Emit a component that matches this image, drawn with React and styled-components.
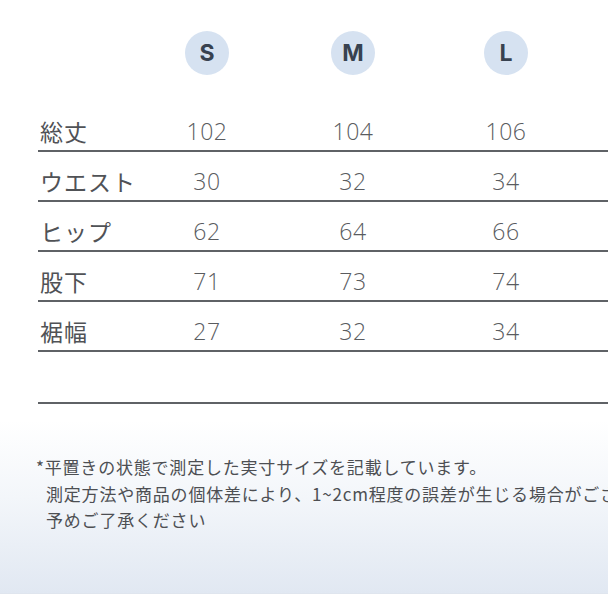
import styled, { createGlobalStyle } from "styled-components";

const GlobalStyle = createGlobalStyle`
    html, body {
        margin: 0;
        padding: 0;
        background: #ffffff;
    }
    body {
        width: 608px;
        height: 608px;
        overflow: hidden;
        font-family: "Noto Sans CJK JP", "Noto Sans", sans-serif;
    }
`

const Page = styled.div`
    width: 608px;
    height: 608px;
    display: flex;
    flex-direction: column;
    background: #ffffff;
    overflow: hidden;
`

const Table = styled.div`
    padding: 31px 0 0 38px;
    display: flex;
    flex-direction: column;
`

const Grid = styled.div`
    display: grid;
    grid-template-columns: 96px 146px 146px 160px 1fr;
    align-items: center;
`

const HeaderRow = styled(Grid)`
    height: 44px;
    margin-bottom: 27px;
`

const SizeBadge = styled.div`
    justify-self: center;
    width: 44px;
    height: 44px;
    border-radius: 50%;
    background: #d6e2f1;
    color: #384250;
    font-family: "Inter", "Open Sans", sans-serif;
    font-weight: 700;
    font-size: 23px;
    display: flex;
    align-items: center;
    justify-content: center;
`

const Row = styled(Grid)`
    height: ${p => p.$h || 50}px;
    box-sizing: border-box;
    border-bottom: 2px solid #5f6266;
    align-items: end;
    padding-bottom: 6px;
`

const Label = styled.div`
    padding-left: 2px;
    font-size: 23px;
    line-height: 26px;
    letter-spacing: 1px;
    color: #505256;
    white-space: nowrap;
`

const Value = styled.div`
    justify-self: center;
    font-family: "Open Sans", "Liberation Sans", sans-serif;
    font-weight: 300;
    font-size: 23px;
    line-height: 26px;
    letter-spacing: 0.5px;
    color: #5a5c5f;
`

const Footer = styled.div`
    margin-top: 16px;
    flex: 1;
    display: flex;
    flex-direction: column;
`

const NoteArea = styled.div`
    flex: 1;
    padding: 34px 0 0 36px;
    background: linear-gradient(to bottom, #ffffff 0%, #f3f6fa 45%, #e1e8f2 100%);
    border-bottom: 1px solid #dfe5ee;
    overflow: hidden;
`

const NoteLine = styled.div`
    font-size: 17px;
    line-height: 26.5px;
    color: #4d4f53;
    white-space: nowrap;
    padding-left: ${p => (p.$indent ? 10 : 0)}px;
    letter-spacing: 0.8px;
`

const BottomStrip = styled.div`
    height: 14px;
    background: #ffffff;
`

const sizes = ["S", "M", "L"];
const rows = [
    { label: "総丈", values: [102, 104, 106] },
    { label: "ウエスト", values: [30, 32, 34] },
    { label: "ヒップ", values: [62, 64, 66] },
    { label: "股下", values: [71, 73, 74] },
    { label: "裾幅", values: [27, 32, 34] },
];

export default function App() {
    return <>
        <GlobalStyle />
        <Page>
            <Table>
                <HeaderRow>
                    <div />
                    {sizes.map(s => <SizeBadge key={s}>{s}</SizeBadge>)}
                </HeaderRow>
                {rows.map(r => (
                    <Row key={r.label}>
                        <Label>{r.label}</Label>
                        {r.values.map((v, i) => <Value key={i}>{v}</Value>)}
                    </Row>
                ))}
                <Row $h={52} />
            </Table>
            <Footer>
                <NoteArea>
                    <NoteLine>*平置きの状態で測定した実寸サイズを記載しています。</NoteLine>
                    <NoteLine $indent>測定方法や商品の個体差により、1~2cm程度の誤差が生じる場合がございます。</NoteLine>
                    <NoteLine $indent>予めご了承ください</NoteLine>
                </NoteArea>
                <BottomStrip />
            </Footer>
        </Page>
    </>
}
